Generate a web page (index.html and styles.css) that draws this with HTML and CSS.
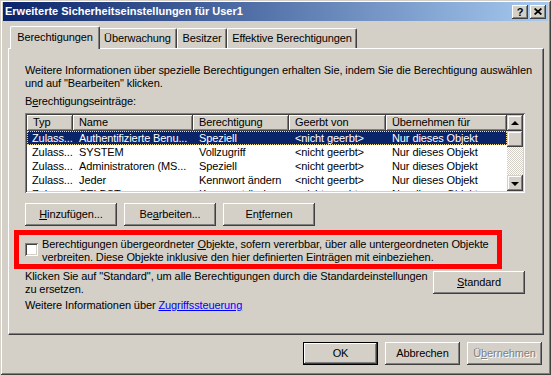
FILE: index.html
```html
<!DOCTYPE html>
<html lang="de">
<head>
<meta charset="utf-8">
<title>Erweiterte Sicherheitseinstellungen</title>
<link rel="stylesheet" href="styles.css">
</head>
<body>
<div class="window">
  <div class="titlebar">
    <span class="title">Erweiterte Sicherheitseinstellungen für User1</span>
    <div class="tbtns">
      <span class="tbtn help">?</span>
      <span class="tbtn close"><svg width="8" height="7" viewBox="0 0 8 7"><path d="M0.6 0.5L7.4 6.5M7.4 0.5L0.6 6.5" stroke="#000" stroke-width="1.7" fill="none"/></svg></span>
    </div>
  </div>
  <div class="tabs">
    <div class="tab active t1">Berechtigungen</div>
    <div class="tab t2">Überwachung</div>
    <div class="tab t3">Besitzer</div>
    <div class="tab t4">Effektive Berechtigungen</div>
  </div>
  <div class="panel">
    <p class="desc">Weitere Informationen über spezielle Berechtigungen erhalten Sie, indem Sie die Berechtigung auswählen<br>und auf "Bearbeiten" klicken.</p>
    <p class="label">B<u>e</u>rechtigungseinträge:</p>
    <div class="listbox">
      <div class="listview">
        <div class="hdr">
          <div class="hc c1">Typ</div>
          <div class="hc c2">Name</div>
          <div class="hc c3">Berechtigung</div>
          <div class="hc c4">Geerbt von</div>
          <div class="hc c5">Übernehmen für</div>
        </div>
        <div class="row sel">
          <div class="cell c1">Zulass...</div>
          <div class="cell c2">Authentifizierte Benu...</div>
          <div class="cell c3">Speziell</div>
          <div class="cell c4">&lt;nicht geerbt&gt;</div>
          <div class="cell c5">Nur dieses Objekt</div>
        </div>
        <div class="row">
          <div class="cell c1">Zulass...</div>
          <div class="cell c2">SYSTEM</div>
          <div class="cell c3">Vollzugriff</div>
          <div class="cell c4">&lt;nicht geerbt&gt;</div>
          <div class="cell c5">Nur dieses Objekt</div>
        </div>
        <div class="row">
          <div class="cell c1">Zulass...</div>
          <div class="cell c2">Administratoren (MS...</div>
          <div class="cell c3">Speziell</div>
          <div class="cell c4">&lt;nicht geerbt&gt;</div>
          <div class="cell c5">Nur dieses Objekt</div>
        </div>
        <div class="row">
          <div class="cell c1">Zulass...</div>
          <div class="cell c2">Jeder</div>
          <div class="cell c3">Kennwort ändern</div>
          <div class="cell c4">&lt;nicht geerbt&gt;</div>
          <div class="cell c5">Nur dieses Objekt</div>
        </div>
        <div class="row">
          <div class="cell c1">Zulass...</div>
          <div class="cell c2">SELBST</div>
          <div class="cell c3">Kennwort ändern</div>
          <div class="cell c4">&lt;nicht geerbt&gt;</div>
          <div class="cell c5">Nur dieses Objekt</div>
        </div>
      </div>
      <div class="vscroll">
        <div class="sbtn"><span class="arrow up"></span></div>
        <div class="sbtn thumb"></div>
        <div class="track"></div>
        <div class="sbtn"><span class="arrow down"></span></div>
      </div>
    </div>
    <div class="btnrow">
      <div class="btn w92"><u>H</u>inzufügen...</div>
      <div class="btn w92">Be<u>a</u>rbeiten...</div>
      <div class="btn w92">En<u>t</u>fernen</div>
    </div>
    <div class="redbox">
      <span class="checkbox"></span>
      <p class="cbtext">Berechtigungen übergeordneter <u>O</u>bjekte, sofern vererbbar, über alle untergeordneten Objekte<br>verbreiten. Diese Objekte inklusive den hier definierten Einträgen mit einbeziehen.</p>
    </div>
    <div class="stdrow">
      <p class="stdtext">Klicken Sie auf "Standard", um alle Berechtigungen durch die Standardeinstellungen<br>zu ersetzen.</p>
      <div class="btn w92 stdbtn"><u>S</u>tandard</div>
    </div>
    <p class="more">Weitere Informationen über <a class="link" href="#">Zugriffssteuerung</a></p>
  </div>
  <div class="footer">
    <div class="btn w75 default">OK</div>
    <div class="btn w75">Abbrechen</div>
    <div class="btn w75 disabled">Ü<u>b</u>ernehmen</div>
  </div>
</div>
</body>
</html>
```

FILE: styles.css
```css
* { box-sizing: border-box; }
html, body { margin: 0; padding: 0; }
body {
  font-family: "Liberation Sans", Arial, sans-serif;
  font-size: 11px;
  line-height: 13px;
  letter-spacing: -0.1px;
  color: #000;
  background: #D4D0C8;
}
p { margin: 0; }

.window {
  width: 551px;
  height: 375px;
  padding: 2px 3px 3px 3px;
  background: #D4D0C8;
  box-shadow: inset 1px 1px #D4D0C8, inset -1px -1px #404040, inset 2px 2px #fff, inset -2px -2px #808080;
  display: flex;
  flex-direction: column;
  overflow: hidden;
}

.titlebar {
  height: 19px;
  flex: none;
  background: linear-gradient(to right, #0A246A, #A6CAF0);
  display: flex;
  align-items: center;
  justify-content: space-between;
  padding: 0 2px 0 2px;
}
.title { color: #fff; font-weight: bold; white-space: nowrap; letter-spacing: 0; }
.tbtns { display: flex; }
.tbtn {
  width: 16px;
  height: 14px;
  background: #D4D0C8;
  box-shadow: inset -1px -1px #404040, inset 1px 1px #fff, inset -2px -2px #808080;
  display: flex;
  align-items: center;
  justify-content: center;
  font-weight: bold;
  font-size: 11px;
  line-height: 14px;
  letter-spacing: 0;
}
.help { margin-right: 2px; }

.tabs {
  display: flex;
  align-items: flex-end;
  height: 23px;
  flex: none;
  margin: 5px 0 -1px 9px;
  position: relative;
  z-index: 1;
}
.tab {
  height: 20px;
  margin-bottom: 1px;
  border-top: 1px solid #fff;
  border-left: 1px solid #fff;
  border-right: 1px solid #404040;
  border-radius: 2px 2px 0 0;
  box-shadow: inset -1px 0 #808080;
  background: #D4D0C8;
  text-align: center;
  padding-top: 3px;
  white-space: nowrap;
}
.t1 { width: 86px; }
.t2 { width: 79px; }
.t3 { width: 50px; }
.t4 { width: 130px; }
.tab.active {
  height: 23px;
  margin: 0 -2px 0 -2px;
  width: 90px;
  position: relative;
  z-index: 2;
  padding-top: 4px;
}

.panel {
  flex: none;
  margin: 0 4px 0 5px;
  height: 287px;
  border: 1px solid;
  border-color: #fff #404040 #404040 #fff;
  box-shadow: inset -1px -1px #808080;
  padding: 15px 0 0 16px;
  display: flex;
  flex-direction: column;
  align-items: flex-start;
}
.label { margin-top: 5px; }

.listbox {
  margin-top: 5px;
  width: 500px;
  height: 80px;
  padding: 2px;
  background: #fff;
  box-shadow: inset 1px 1px #808080, inset -1px -1px #fff, inset 2px 2px #404040, inset -2px -2px #D4D0C8;
  display: flex;
}
.listview { width: 480px; overflow: hidden; display: flex; flex-direction: column; }
.hdr { display: flex; height: 16px; flex: none; background: #D4D0C8; }
.hc {
  height: 16px;
  line-height: 15px;
  padding-left: 6px;
  box-shadow: inset -1px -1px #404040, inset 1px 1px #fff, inset -2px -2px #808080;
  white-space: nowrap;
  overflow: hidden;
}
.c1 { width: 46px; flex: none; }
.c2 { width: 120px; flex: none; }
.c3 { width: 96px; flex: none; }
.c4 { width: 97px; flex: none; }
.c5 { width: 121px; flex: none; }
.row { display: flex; height: 14px; flex: none; line-height: 14px; }
.cell { padding-left: 6px; white-space: nowrap; overflow: hidden; }
.row .c1 { padding-left: 5px; }
.row.sel { background: #0A246A; color: #fff; outline: 1px dotted #F5DB95; outline-offset: -1px; }

.vscroll { width: 16px; display: flex; flex-direction: column; }
.sbtn {
  width: 16px;
  height: 16px;
  flex: none;
  background: #D4D0C8;
  box-shadow: inset -1px -1px #404040, inset 1px 1px #D4D0C8, inset -2px -2px #808080, inset 2px 2px #fff;
  display: flex;
  align-items: center;
  justify-content: center;
}
.track {
  flex: 1;
  background: repeating-conic-gradient(#fff 0 25%, #D4D0C8 0 50%) 0 0 / 2px 2px;
}
.arrow { width: 0; height: 0; border-left: 4px solid transparent; border-right: 4px solid transparent; }
.arrow.up { border-bottom: 4px solid #000; margin-top: -1px; }
.arrow.down { border-top: 4px solid #000; margin-top: 1px; }

.btn {
  height: 23px;
  background: #D4D0C8;
  box-shadow: inset -1px -1px #404040, inset 1px 1px #fff, inset -2px -2px #808080;
  display: flex;
  align-items: center;
  justify-content: center;
  white-space: nowrap;
}
.w92 { width: 92px; }
.w75 { width: 75px; }
.btn.default { box-shadow: inset 0 0 0 1px #000, inset -2px -2px #404040, inset 2px 2px #fff, inset -3px -3px #808080; }
.btn.disabled { color: #808080; text-shadow: 1px 1px #fff; }

.btnrow { display: flex; gap: 7px; margin-top: 10px; }

.redbox {
  margin-top: 4px;
  margin-left: -11px;
  width: 488px;
  height: 39px;
  border: 5px solid #FF0000;
  padding: 3px 0 0 6px;
  display: flex;
  align-items: flex-start;
}
.checkbox {
  width: 13px;
  height: 13px;
  flex: none;
  margin-top: 5px;
  margin-right: 4px;
  background: #fff;
  box-shadow: inset 1px 1px #808080, inset -1px -1px #fff, inset 2px 2px #404040, inset -2px -2px #D4D0C8;
}
.cbtext { white-space: nowrap; }

.stdrow {
  margin-top: 1px;
  width: 500px;
  display: flex;
  justify-content: space-between;
  align-items: flex-start;
}
.stdtext { white-space: nowrap; }
.stdbtn { margin-top: 1px; }
.more { margin-top: 3px; }
.link { color: #0000FF; text-decoration: underline; }

.footer {
  flex: none;
  display: flex;
  justify-content: flex-end;
  gap: 7px;
  margin-top: 7px;
  padding-right: 6px;
}
```
